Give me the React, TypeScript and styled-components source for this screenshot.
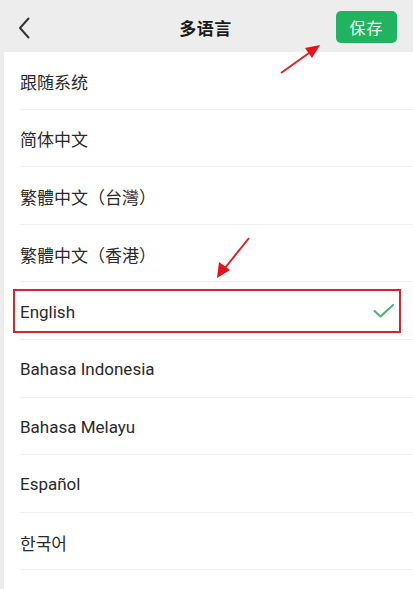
import React from "react";
import styled, { createGlobalStyle } from "styled-components";

const Global = createGlobalStyle`
  html, body { margin: 0; padding: 0; background: #ededed; }
  body { font-family: Roboto, "Noto Sans CJK SC", "Noto Sans CJK KR", sans-serif; }
`;

const Page = styled.div`
  position: relative;
  width: 413px;
  height: 589px;
  overflow: hidden;
  background: #ededed;
  display: flex;
  flex-direction: column;
`;

const Header = styled.header`
  height: 52px;
  flex: none;
  display: grid;
  grid-template-columns: 80px 1fr 80px;
  align-items: center;
  padding: 0 16px 0 14px;
  box-sizing: border-box;
`;

const BackButton = styled.button`
  justify-self: start;
  background: none;
  border: 0;
  padding: 0;
  width: 20px;
  height: 24px;
  display: flex;
  align-items: center;
  justify-content: center;
  margin-top: 3px;
`;

const Title = styled.h1`
  margin: 0;
  text-align: center;
  font-size: 17px;
  font-weight: 600;
  color: #1a1a1a;
  letter-spacing: 0.5px;
  margin-top: 2px;
`;

const SaveButton = styled.button`
  justify-self: end;
  width: 61px;
  height: 32px;
  margin-top: 2px;
  border: 0;
  border-radius: 5px;
  background: #21b35f;
  color: #f4fff8;
  font-size: 16px;
  font-family: "Noto Sans CJK SC", sans-serif;
  letter-spacing: 1px;
`;

const List = styled.ul`
  list-style: none;
  margin: 0 0 0 4px;
  padding: 0;
  flex: 1;
  background: #ffffff;
`;

const Row = styled.li`
  position: relative;
  height: 57.6px;
  display: flex;
  align-items: center;
  justify-content: space-between;
  padding: 1px 18px 0 16px;
  box-sizing: border-box;
  font-size: 17px;
  color: #2a2a2a;
  &::after {
    content: "";
    position: absolute;
    left: 16px;
    right: 0;
    bottom: 0;
    height: 1px;
    background: #f0f0f0;
  }
`;

const Highlight = styled.span`
  position: absolute;
  left: 9px;
  top: 7px;
  width: 388px;
  height: 44px;
  border: 2px solid #d5262d;
  box-sizing: border-box;
  pointer-events: none;
`;

const Check = styled.svg`
  width: 22px;
  height: 16px;
`;

const Overlay = styled.svg`
  position: absolute;
  left: 0;
  top: 0;
  width: 413px;
  height: 589px;
  pointer-events: none;
`;

const languages = [
  "跟随系统",
  "简体中文",
  "繁體中文（台灣）",
  "繁體中文（香港）",
  "English",
  "Bahasa Indonesia",
  "Bahasa Melayu",
  "Español",
  "한국어",
];

export default function App() {
  const selected = "English";
  return (
    <>
      <Global />
      <Page>
        <Header>
          <BackButton aria-label="back">
            <svg width="12" height="22" viewBox="0 0 12 22">
              <path d="M10.5 1.5 L2 11 L10.5 20.5" fill="none" stroke="#333" strokeWidth="2" strokeLinecap="round" strokeLinejoin="round" />
            </svg>
          </BackButton>
          <Title>多语言</Title>
          <SaveButton>保存</SaveButton>
        </Header>
        <List>
          {languages.map((l) => (
            <Row key={l}>
              <span>{l}</span>
              {l === selected && (
                <>
                  <Check viewBox="0 0 22 16">
                    <path d="M1.5 7 L7.5 12.5 L20 1" fill="none" stroke="#4caf7d" strokeWidth="2" strokeLinecap="round" strokeLinejoin="round" />
                  </Check>
                  <Highlight />
                </>
              )}
            </Row>
          ))}
        </List>
        <Overlay viewBox="0 0 413 589">
          <line x1="281" y1="73" x2="309" y2="53" stroke="#d8222a" strokeWidth="2" />
          <polygon points="320,45 305,48 312,58" fill="#e3131b" />
          <line x1="249" y1="238" x2="225" y2="268" stroke="#d8222a" strokeWidth="2" />
          <polygon points="217,278 219,262 230,270" fill="#e3131b" />
        </Overlay>
      </Page>
    </>
  );
}
